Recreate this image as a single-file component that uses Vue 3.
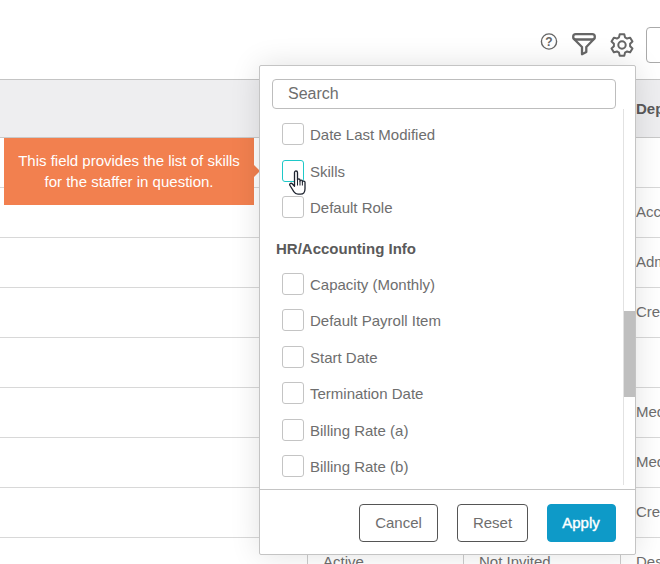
<script setup>
const rows = [
  { dep: '' },
  { dep: 'Accounting' },
  { dep: 'Admin' },
  { dep: 'Creative' },
  { dep: '' },
  { dep: 'Media' },
  { dep: 'Media' },
  { dep: 'Creative' },
]
const groupOne = ['Date Last Modified', 'Skills', 'Default Role']
const groupTwo = ['Capacity (Monthly)', 'Default Payroll Item', 'Start Date', 'Termination Date', 'Billing Rate (a)', 'Billing Rate (b)']

function gearPath(teeth, outer, root, cx, cy) {
  const pts = []
  const step = (Math.PI * 2) / teeth
  for (let i = 0; i < teeth; i++) {
    const a = i * step - Math.PI / 2
    const spec = [[-0.36, root], [-0.2, outer], [0.2, outer], [0.36, root]]
    for (const [k, r] of spec) {
      const t = a + k * step
      pts.push((cx + r * Math.cos(t)).toFixed(2) + ' ' + (cy + r * Math.sin(t)).toFixed(2))
    }
  }
  return 'M' + pts.join('L') + 'Z'
}
const gear = gearPath(6, 11, 8.2, 12, 12)
</script>

<template>
  <div class="page">
    <header class="toolbar">
      <svg class="ic-help" width="18" height="18" viewBox="0 0 18 18" fill="none">
        <circle cx="9" cy="9.500" r="7.600" stroke="#666" stroke-width="1.400" />
        <text x="9" y="13.500" text-anchor="middle" class="q">?</text>
      </svg>
      <svg class="ic-funnel" width="26" height="24" viewBox="0 0 26 24" fill="none" stroke="#666" stroke-width="2.300" stroke-linejoin="round">
        <rect x="2.200" y="2.200" width="21.600" height="5.300" rx="2.600" />
        <path d="M3.500 7.500 11 15V22.300L15.300 20V15L22.500 7.500" />
      </svg>
      <svg class="ic-gear" width="24" height="24" viewBox="0 0 24 24" fill="none" stroke="#666" stroke-width="2" stroke-linejoin="round">
        <path :d="gear" />
        <circle cx="12" cy="12" r="3.700" />
      </svg>
      <div class="tool-box"></div>
    </header>

    <section class="table">
      <div class="thead">
        <div class="cell"></div>
        <div class="cell"></div>
        <div class="cell"></div>
        <div class="cell th">Department</div>
      </div>
      <div v-for="(row, i) in rows" :key="i" class="trow">
        <div class="cell"></div>
        <div class="cell"></div>
        <div class="cell"></div>
        <div class="cell td">{{ row.dep }}</div>
      </div>
      <div class="trow last">
        <div class="cell"></div>
        <div class="cell td">Active</div>
        <div class="cell td">Not Invited</div>
        <div class="cell td">Design</div>
      </div>
    </section>

    <div class="tooltip">
      This field provides the list of skills<br />for the staffer in question.
      <span class="tip-arrow"></span>
    </div>

    <aside class="popover">
      <div class="search-wrap">
        <input class="search" type="text" placeholder="Search" />
      </div>
      <div class="list">
        <div class="options">
          <label v-for="name in groupOne" :key="name" class="option">
            <span class="box" :class="{ active: name === 'Skills' }"></span>
            <span class="label-text">{{ name }}</span>
          </label>
          <h4 class="group">HR/Accounting Info</h4>
          <label v-for="name in groupTwo" :key="name" class="option">
            <span class="box"></span>
            <span class="label-text">{{ name }}</span>
          </label>
        </div>
        <div class="track"><div class="thumb"></div></div>
      </div>
      <footer class="actions">
        <button class="btn cancel">Cancel</button>
        <button class="btn reset">Reset</button>
        <button class="btn apply">Apply</button>
      </footer>
    </aside>

    <svg class="cursor" width="18" height="26" viewBox="0 0 18 26">
      <path d="M5.500 2.500C5.500.5 8.500.5 8.500 2.500V10c0-1.400 2.500-1.400 2.500 0v1c0-1.300 2.400-1.300 2.400 0v1c0-1.300 2.600-1.200 2.600.2v6.500c0 3.300-1.500 5.500-4.500 5.500H9c-2.200 0-3.200-1-4.200-2.500L1 15.500c-1-1.700 1-3 2.200-1.700l2.300 2.500Z" fill="#fff" stroke="#1f2430" stroke-width="1.300" stroke-linejoin="round" />
      <path d="M8.500 10v5.500M11 11v4.500M13.400 12v3.500" stroke="#1f2430" stroke-width="1" fill="none" />
    </svg>
  </div>
</template>

<style>
html, body { margin: 0; background: #fff; }
</style>

<style scoped>
.page {
  position: relative;
  width: 660px;
  height: 564px;
  overflow: hidden;
  background: #fff;
  font-family: "Liberation Sans", Arial, sans-serif;
  color: #6e6e6e;
}
.toolbar {
  height: 79px;
  display: flex;
  align-items: flex-start;
  justify-content: flex-end;
  box-sizing: border-box;
}
.ic-help { margin-top: 32px; margin-right: 13px; }
.q { font: 12px "Liberation Sans", sans-serif; font-weight: bold; fill: #666; stroke: none; }
.ic-funnel { margin-top: 32px; margin-right: 13px; }
.ic-gear { margin-top: 33px; margin-right: 12px; }
.tool-box {
  margin-top: 27px;
  width: 40px;
  height: 36px;
  margin-right: -26px;
  box-sizing: border-box;
  border: 1px solid #aaa;
  border-radius: 4px;
}
.table { border-top: 1px solid #c4c4c4; }
.thead, .trow {
  display: grid;
  grid-template-columns: 307px 156px 157px 40px;
  box-sizing: border-box;
}
.thead {
  height: 58px;
  background: #eeeef0;
  border-bottom: 1px solid #c9c9c9;
}
.trow {
  height: 50px;
  border-bottom: 1px solid #d8d8d8;
  background: #fff;
}
.cell {
  padding-left: 16px;
  padding-bottom: 2px;
  box-sizing: border-box;
  display: flex;
  align-items: center;
  white-space: nowrap;
  overflow: hidden;
  font-size: 15px;
}
.th { font-weight: bold; color: #5a5a5a; padding-bottom: 0; }
.td { color: #6e6e6e; }
.last .cell { border-left: 1px solid #ccc; align-items: flex-start; padding-left: 15px; line-height: 48px; }
.last .cell:first-child { border-left: 0; }
.tooltip {
  position: absolute;
  left: 4px;
  top: 138px;
  width: 250px;
  height: 67px;
  box-sizing: border-box;
  padding-top: 12px;
  background: #f2804f;
  color: #fff;
  font-size: 15px;
  line-height: 21px;
  text-align: center;
}
.tip-arrow {
  position: absolute;
  left: 100%;
  top: 27px;
  border-left: 6px solid #f2804f;
  border-top: 6px solid transparent;
  border-bottom: 6px solid transparent;
}
.popover {
  position: absolute;
  left: 259px;
  top: 65px;
  width: 377px;
  height: 490px;
  box-sizing: border-box;
  display: flex;
  flex-direction: column;
  background: #fff;
  border: 1px solid #c4c4c4;
  border-radius: 2px;
  box-shadow: 0 0 30px rgba(0, 0, 0, 0.12);
}
.search-wrap { padding: 13px 19px 0 12px; }
.search {
  display: block;
  width: 100%;
  height: 30px;
  box-sizing: border-box;
  padding: 0 15px;
  border: 1px solid #bdbdbd;
  border-radius: 4px;
  outline: 0;
  font: 16px "Liberation Sans", Arial, sans-serif;
  color: #6e6e6e;
}
.search::placeholder { color: #6e6e6e; opacity: 1; }
.list {
  position: relative;
  flex: 1;
  min-height: 0;
  overflow: hidden;
}
.options {
  padding: 14.400px 0 0 22px;
  display: flex;
  flex-direction: column;
}
.option {
  height: 22px;
  margin-bottom: 14.500px;
  display: flex;
  align-items: center;
  gap: 6px;
  font-size: 15px;
  color: #6e6e6e;
}
.label-text { padding-top: 0.600px; }
.box {
  width: 22px;
  height: 22px;
  box-sizing: border-box;
  border: 1px solid #c4c4c4;
  border-radius: 3px;
}
.box.active { border-color: #1ec8c8; }
.group {
  margin: 8px 0 16px -6px;
  font-size: 15px;
  line-height: 16px;
  font-weight: bold;
  color: #5a5a5a;
}
.track {
  position: absolute;
  right: 0;
  top: 0;
  bottom: 4px;
  width: 12px;
  border-left: 1px solid #e2e2e2;
  box-sizing: border-box;
}
.thumb {
  position: absolute;
  top: 202px;
  left: 0;
  width: 12px;
  height: 86px;
  background: #bfbfbf;
}
.actions {
  height: 65px;
  box-sizing: border-box;
  border-top: 1px solid #c4c4c4;
  display: flex;
  justify-content: flex-end;
  align-items: center;
  gap: 19px;
  padding: 1px 19px 0 0;
}
.btn {
  height: 38px;
  box-sizing: border-box;
  border: 1px solid #555;
  border-radius: 4px;
  background: #fff;
  color: #6e6e6e;
  font: 15px "Liberation Sans", Arial, sans-serif;
  padding: 0;
}
.cancel { width: 79px; }
.reset { width: 71px; }
.apply {
  width: 69px;
  padding-right: 1px;
  background: #0e9ac8;
  border-color: #0e9ac8;
  color: #fff;
  -webkit-text-stroke: 0.4px #fff;
}
.cursor {
  position: absolute;
  left: 289px;
  top: 170px;
}
</style>
